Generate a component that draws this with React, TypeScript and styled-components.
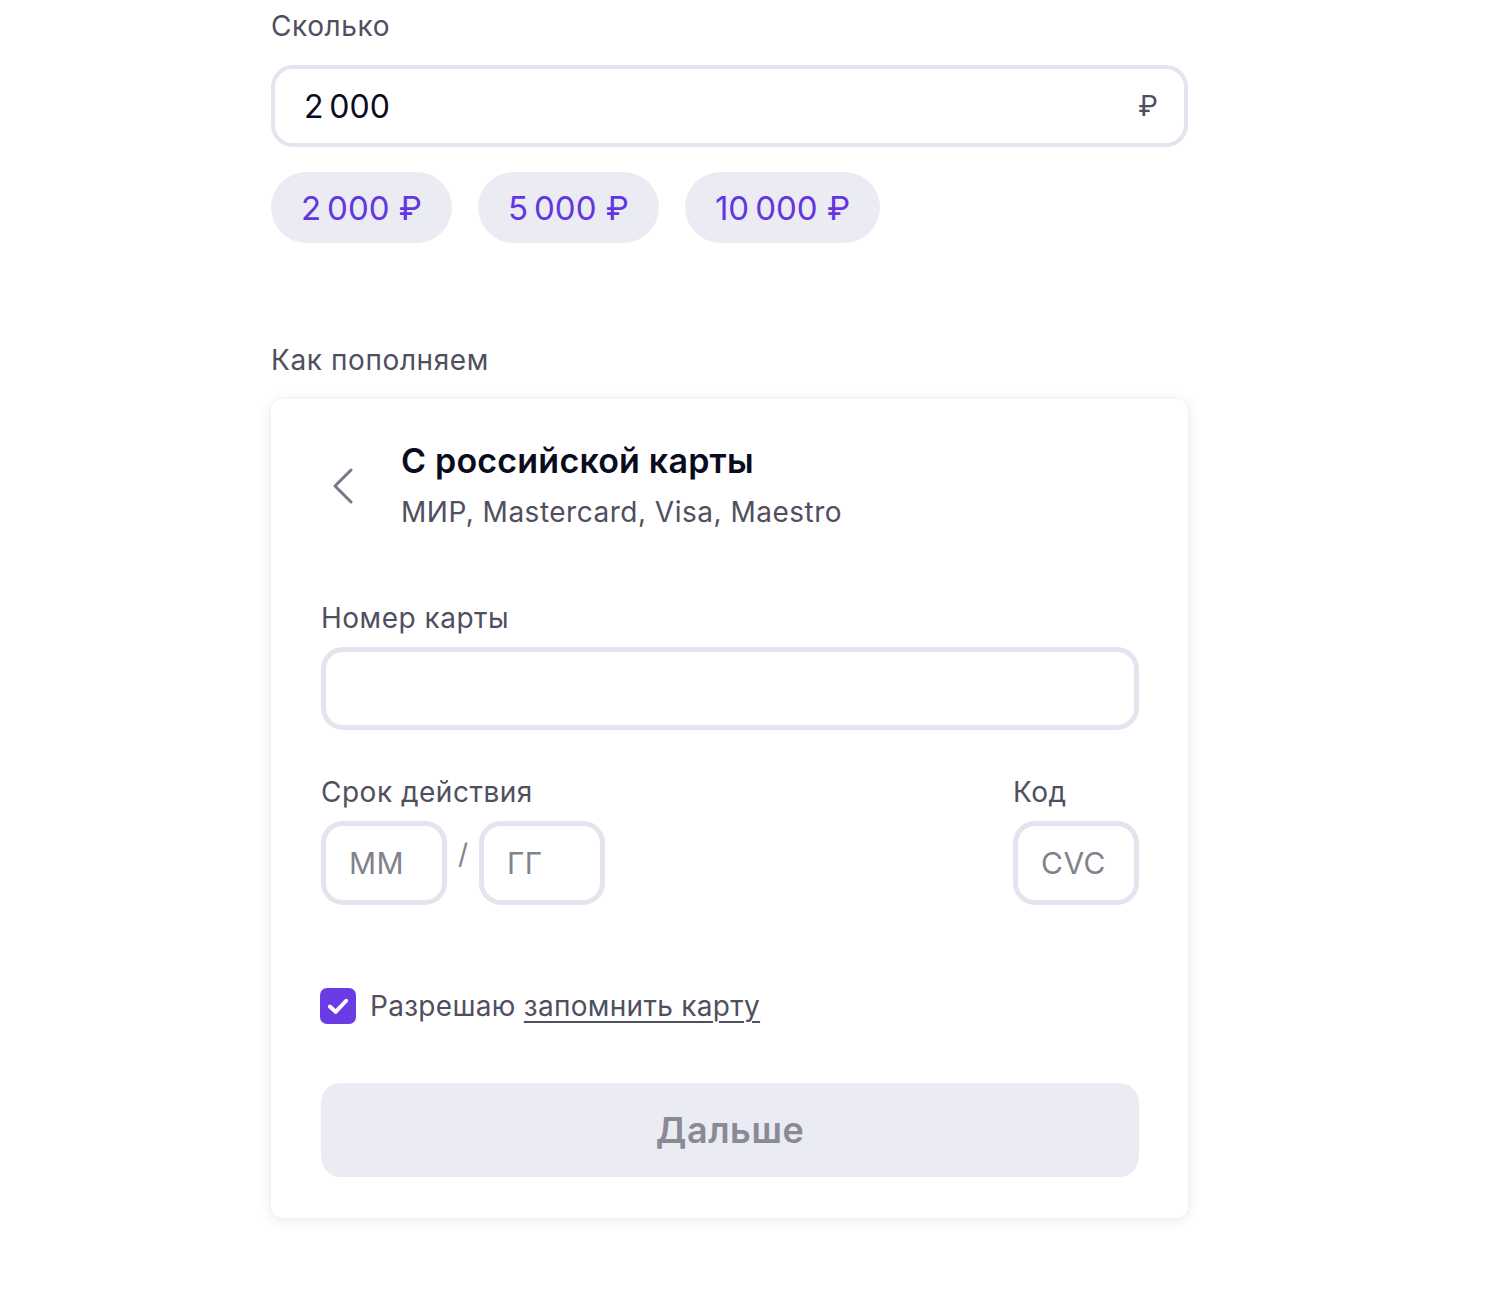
import React, { useState } from "react";
import styled, { createGlobalStyle } from "styled-components";

const GlobalStyle = createGlobalStyle`
  * { box-sizing: border-box; }
  html, body { margin: 0; padding: 0; background: #ffffff; }
  body { font-family: Inter, "Noto Sans", "Liberation Sans", sans-serif; color: #0b0b1e; }
`;

const Page = styled.div`
  width: 917px;
  margin-left: 271px;
  padding-top: 8px;
  padding-bottom: 72px;
`;

const SectionLabel = styled.div<{ $gap?: number }>`
  font-size: 28px;
  line-height: 36px;
  color: #4f4f60;
  margin-bottom: ${(p) => p.$gap ?? 21}px;
  letter-spacing: 0.6px;
`;

const AmountBox = styled.div`
  height: 82px;
  border: 4px solid #e4e4ef;
  border-radius: 22px;
  display: flex;
  align-items: center;
  justify-content: space-between;
  padding: 0 26px 0 29px;
`;

const AmountValue = styled.span`
  font-size: 32px;
  color: #0b0b1e;
  letter-spacing: 0.5px;
`;

const Currency = styled.span`
  font-size: 28px;
  color: #4f4f60;
`;

const Chips = styled.div`
  display: flex;
  gap: 26px;
  margin-top: 25px;
  margin-bottom: 99px;
`;

const Chip = styled.button`
  height: 71px;
  padding: 0 30px;
  border: none;
  border-radius: 36px;
  background: #ebebf3;
  color: #6436e0;
  font-family: Inter, "Noto Sans", sans-serif;
  font-size: 33px;
  cursor: pointer;
`;

const Card = styled.div`
  background: #fff;
  border-radius: 10px;
  box-shadow: 0 0 1px rgba(0, 0, 0, 0.14), 0 2px 14px rgba(0, 0, 0, 0.09);
  padding: 42px 49px 41px 50px;
`;

const Header = styled.div`
  display: flex;
  align-items: center;
`;

const BackButton = styled.button`
  width: 44px;
  height: 44px;
  margin-right: 36px;
  padding: 0;
  border: none;
  background: none;
  display: flex;
  align-items: center;
  justify-content: center;
  cursor: pointer;
`;

const HeaderText = styled.div`
  display: flex;
  flex-direction: column;
  gap: 13px;
`;

const Title = styled.div`
  font-size: 34px;
  line-height: 40px;
  font-weight: 600;
  color: #0b0b1e;
  letter-spacing: 0.2px;
`;

const Subtitle = styled.div`
  font-size: 28px;
  line-height: 36px;
  color: #4f4f60;
  letter-spacing: 0.5px;
`;

const FieldLabel = styled.div<{ $top: number }>`
  font-size: 28px;
  line-height: 36px;
  color: #4f4f60;
  letter-spacing: 0.5px;
  margin-top: ${(p) => p.$top}px;
  margin-bottom: 11px;
`;

const Input = styled.input<{ $w?: number }>`
  display: block;
  width: ${(p) => (p.$w ? `${p.$w}px` : "100%")};
  height: ${(p) => (p.$w ? 84 : 83)}px;
  border: 5px solid #e4e4ef;
  border-radius: 22px;
  padding: 0 0 0 23px;
  font-family: inherit;
  font-size: 30px;
  letter-spacing: 0.5px;
  color: #0b0b1e;
  outline: none;
  background: #fff;
  &::placeholder { color: #82828e; }
`;

const DateRow = styled.div`
  display: flex;
  justify-content: space-between;
  align-items: flex-start;
`;

const Group = styled.div``;

const DateInputs = styled.div`
  display: flex;
  align-items: flex-start;
`;

const Slash = styled.span`
  width: 32px;
  text-align: center;
  font-size: 28px;
  line-height: 66px;
  color: #82828e;
`;

const CheckRow = styled.label`
  display: flex;
  align-items: center;
  gap: 14px;
  margin-top: 83px;
  margin-left: -1px;
  font-size: 28px;
  letter-spacing: 0.3px;
  color: #4f4f60;
  cursor: pointer;
`;

const CheckBox = styled.span`
  width: 36px;
  height: 36px;
  border-radius: 7px;
  background: #6b3be6;
  display: flex;
  align-items: center;
  justify-content: center;
`;

const Link = styled.span`
  text-decoration: underline;
  text-underline-offset: 5px;
  text-decoration-thickness: 2px;
`;

const Submit = styled.button`
  display: block;
  width: 100%;
  height: 94px;
  margin-top: 59px;
  border: none;
  border-radius: 20px;
  background: #ebebf3;
  color: #8a8a96;
  font-family: inherit;
  font-size: 36px;
  font-weight: 600;
  letter-spacing: 0.5px;
`;

const NN = "\u202F";

export default function App() {
  const [amount, setAmount] = useState(`2${NN}000`);
  return (
    <>
      <GlobalStyle />
      <Page>
        <SectionLabel>Сколько</SectionLabel>
        <AmountBox>
          <AmountValue>{amount}</AmountValue>
          <Currency>₽</Currency>
        </AmountBox>
        <Chips>
          {[`2${NN}000`, `5${NN}000`, `10${NN}000`].map((v) => (
            <Chip key={v} onClick={() => setAmount(v)}>
              {v} ₽
            </Chip>
          ))}
        </Chips>
        <SectionLabel>Как пополняем</SectionLabel>
        <Card>
          <Header>
            <BackButton aria-label="Назад">
              <svg width="24" height="36" viewBox="0 0 24 36" fill="none">
                <path d="M20 2 L4 18 L20 34" stroke="#77778a" strokeWidth="3" strokeLinecap="round" strokeLinejoin="round" />
              </svg>
            </BackButton>
            <HeaderText>
              <Title>С российской карты</Title>
              <Subtitle>МИР, Mastercard, Visa, Maestro</Subtitle>
            </HeaderText>
          </Header>
          <FieldLabel $top={70}>Номер карты</FieldLabel>
          <Input />
          <DateRow>
            <Group>
              <FieldLabel $top={44}>Срок действия</FieldLabel>
              <DateInputs>
                <Input $w={126} placeholder="ММ" />
                <Slash>/</Slash>
                <Input $w={126} placeholder="ГГ" />
              </DateInputs>
            </Group>
            <Group>
              <FieldLabel $top={44}>Код</FieldLabel>
              <Input $w={126} placeholder="CVC" />
            </Group>
          </DateRow>
          <CheckRow>
            <CheckBox>
              <svg width="28" height="28" viewBox="0 0 24 24" fill="none">
                <path d="M5 12.5 L10 17 L19 7.5" stroke="#fff" strokeWidth="3.4" strokeLinecap="round" strokeLinejoin="round" />
              </svg>
            </CheckBox>
            <span>
              Разрешаю <Link>запомнить карту</Link>
            </span>
          </CheckRow>
          <Submit>Дальше</Submit>
        </Card>
      </Page>
    </>
  );
}
